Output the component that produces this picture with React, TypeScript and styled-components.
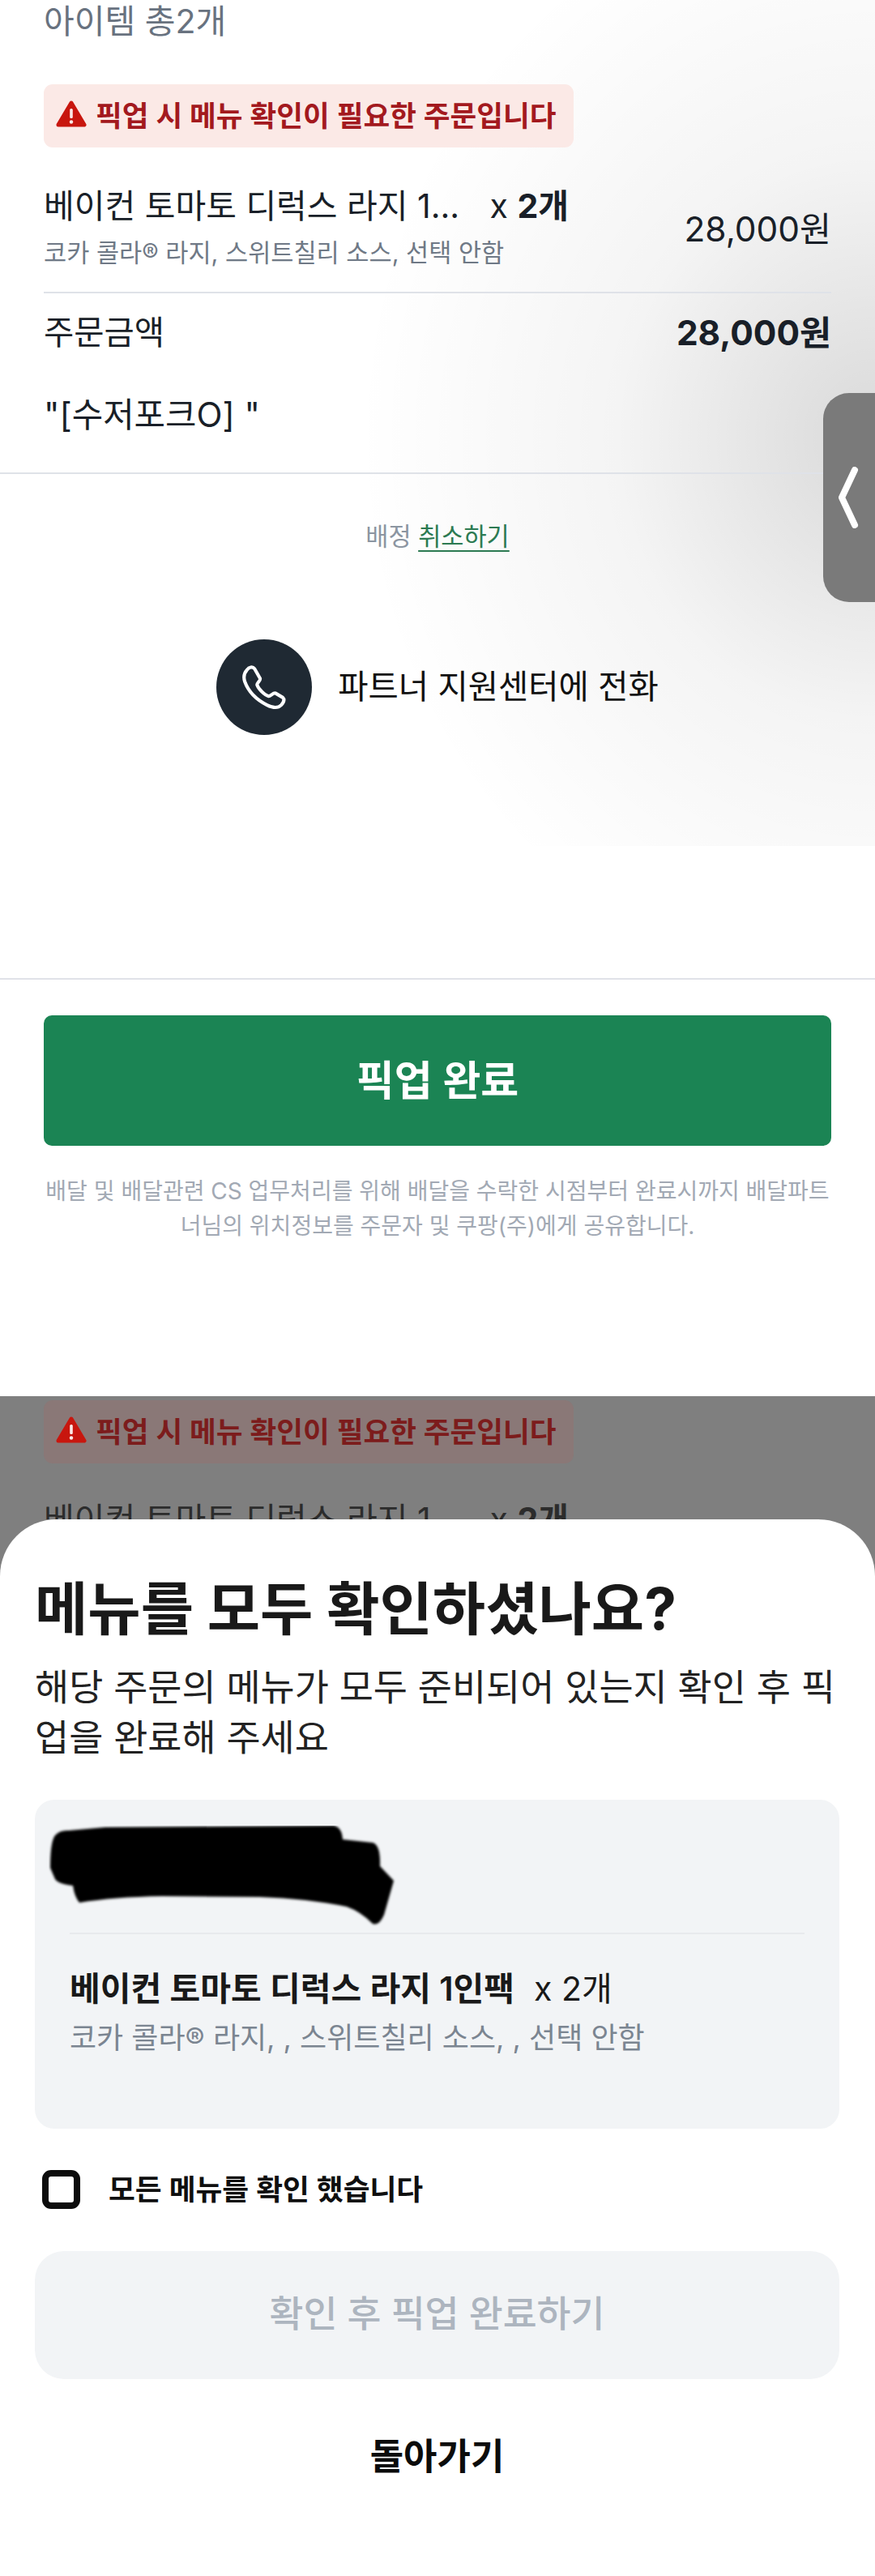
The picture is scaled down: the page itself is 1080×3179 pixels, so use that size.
import React from "react";
import styled, { createGlobalStyle } from "styled-components";

const Global = createGlobalStyle`
  html, body { margin: 0; padding: 0; background: #fff; }
  * { box-sizing: border-box; }
  body { font-family: Inter, "Noto Sans CJK KR", "Noto Sans", sans-serif; color: #191f28; }
`;

const Page = styled.div`
  width: 1080px;
  height: 3179px;
  overflow: hidden;
  position: relative;
  display: flex;
  flex-direction: column;
`;

const TopScreen = styled.section`
  height: 1723px;
  position: relative;
  background:
    radial-gradient(ellipse 640px 700px at 100% 540px, rgba(0, 0, 0, 0.15), rgba(0, 0, 0, 0.045) 50%, rgba(0, 0, 0, 0) 100%) 0 0 / 100% 1044px no-repeat,
    radial-gradient(ellipse 560px 190px at 100% 1044px, rgba(0, 0, 0, 0.035), rgba(0, 0, 0, 0) 100%) 0 1044px / 100% 170px no-repeat,
    #fff;
`;

const OrderInfo = styled.div`
  padding: 0 54px 44px;
  border-bottom: 2px solid #dfe2e8;
`;

const ItemCount = styled.div`
  font-size: 41px;
  line-height: 52px;
  color: #68727f;
`;

const AlertBox = styled.div<{ $dim?: boolean }>`
  width: 654px;
  height: 78px;
  margin-top: ${(p) => (p.$dim ? 5 : 52)}px;
  padding: 0 0 5px 15px;
  display: flex;
  align-items: center;
  gap: 11px;
  border-radius: 11px;
  background: ${(p) => (p.$dim ? "#8a7877" : "#fbe9e6")};
  color: ${(p) => (p.$dim ? "#7c1c1c" : "#a3191e")};
  font-size: 35.6px;
  font-weight: 600;
  white-space: nowrap;
`;

const ItemRow = styled.div`
  margin-top: 50px;
  padding-bottom: 28px;
  display: flex;
  align-items: center;
  justify-content: space-between;
  border-bottom: 2px solid #dfe2e8;
`;

const ItemMain = styled.div`
  display: flex;
  flex-direction: column;
  gap: 16px;
`;

const ItemName = styled.div<{ $dim?: boolean }>`
  display: flex;
  width: 648px;
  justify-content: space-between;
  font-size: 41px;
  line-height: 44px;
  white-space: nowrap;
  color: ${(p) => (p.$dim ? "#2c2c2c" : "#191f28")};
`;

const Qty = styled.span`
  b { font-weight: 700; }
`;

const ItemOptions = styled.div`
  font-size: 30.6px;
  line-height: 40px;
  color: #6f7986;
  white-space: nowrap;
`;

const Price = styled.div<{ $bold?: boolean }>`
  font-size: 42.4px;
  font-weight: ${(p) => (p.$bold ? 700 : 400)};
  padding-bottom: ${(p) => (p.$bold ? 0 : 6)}px;
`;

const TotalRow = styled.div`
  margin-top: 24px;
  display: flex;
  align-items: center;
  justify-content: space-between;
  font-size: 40.5px;
  line-height: 50px;
`;

const Note = styled.div`
  margin-top: 51px;
  font-size: 41.8px;
  line-height: 50px;
  color: #191f28;
`;

const NoteSpacer = styled.div`
  height: 2px;
`;

const Cancel = styled.div`
  margin-top: 57px;
  text-align: center;
  font-size: 30.6px;
  line-height: 40px;
  color: #8b95a1;
  a {
    color: #2c7a52;
    text-decoration: underline;
    text-underline-offset: 6px;
    text-decoration-thickness: 2px;
  }
`;

const CallRow = styled.div`
  margin-top: 107px;
  display: flex;
  justify-content: center;
  align-items: center;
  gap: 32px;
  font-size: 40.5px;
  color: #111;
`;

const CallCircle = styled.div`
  width: 118px;
  height: 118px;
  border-radius: 50%;
  background: #1f2933;
  display: flex;
  align-items: center;
  justify-content: center;
`;

const CallLabel = styled.span`
  padding-bottom: 8px;
`;

const ActionFooter = styled.div`
  margin-top: 300px;
  padding: 44px 54px 0;
  border-top: 2px solid #e0e2e8;
`;

const PickupButton = styled.button`
  display: block;
  width: 100%;
  height: 161px;
  padding: 0 0 8px;
  border: 0;
  border-radius: 10px;
  background: #1b8454;
  color: #fff;
  font-family: inherit;
  font-size: 51px;
  font-weight: 600;
`;

const Disclaimer = styled.p`
  margin: 35px 0 0;
  text-align: center;
  font-size: 28px;
  line-height: 43px;
  color: #a2a9b4;
  white-space: nowrap;
`;

const SideHandle = styled.div`
  position: absolute;
  top: 485px;
  right: 0;
  width: 64px;
  height: 258px;
  background: #7a7a7a;
  border-radius: 32px 0 0 32px;
  display: flex;
  align-items: center;
  padding-left: 18px;
`;

const Dimmed = styled.div`
  height: 152px;
  overflow: hidden;
  background: #7f7f7f;
  padding: 0 54px;
`;

const DimmedItem = styled.div`
  margin-top: 47px;
`;

const SheetArea = styled.div`
  flex: 1;
  display: flex;
  flex-direction: column;
  background: #7f7f7f;
`;

const Sheet = styled.section`
  flex: 1;
  padding: 70px 44px 0 43px;
  background: #fff;
  border-radius: 70px 70px 0 0;
`;

const SheetTitle = styled.h2`
  margin: 0;
  font-size: 71px;
  line-height: 80px;
  font-weight: 700;
  color: #191919;
  white-space: nowrap;
`;

const SheetText = styled.p`
  margin: 27px 0 0;
  font-size: 45.8px;
  line-height: 62px;
  color: #222;
  white-space: nowrap;
`;

const SummaryCard = styled.div`
  margin-top: 45px;
  height: 406px;
  padding: 32px 43px 0;
  border-radius: 24px;
  background: #f2f4f6;
`;

const RedactedMark = styled.svg`
  display: block;
  width: 430px;
  height: 125px;
  margin-left: -26px;
`;

const CardDivider = styled.div`
  height: 2px;
  margin-top: 7px;
  background: #e8eaed;
`;

const CardItem = styled.div`
  margin-top: 42px;
  font-size: 41px;
  line-height: 50px;
  white-space: nowrap;
  color: #191919;
  b { font-weight: 600; }
  span { margin-left: 24px; }
`;

const CardOptions = styled.div`
  margin-top: 13px;
  font-size: 36px;
  line-height: 46px;
  color: #7b8591;
  white-space: nowrap;
`;

const CheckRow = styled.label`
  margin-top: 51px;
  padding-left: 9px;
  display: flex;
  align-items: center;
  gap: 35px;
  height: 48px;
  line-height: 46px;
  font-size: 35.7px;
  font-weight: 600;
  color: #0f0f0f;
`;

const CheckBox = styled.span`
  width: 47px;
  height: 48px;
  border: 8px solid #0c0c0c;
  border-radius: 11px;
  background: #fff;
  flex: none;
`;

const ConfirmButton = styled.button`
  display: block;
  width: 100%;
  height: 158px;
  margin-top: 52px;
  padding: 0 0 10px;
  border: 0;
  border-radius: 36px;
  background: #f2f4f6;
  color: #adb5bf;
  font-family: inherit;
  font-size: 45.6px;
  font-weight: 500;
`;

const BackLink = styled.div`
  margin-top: 66px;
  text-align: center;
  font-size: 45px;
  line-height: 60px;
  font-weight: 600;
  color: #0c0c0c;
`;

const WarningIcon = () => (
  <svg width="38" height="34" viewBox="0 0 38 34" style={{ flex: "none" }}>
    <path d="M19 3 L35 30 H3 Z" fill="#c8160e" stroke="#c8160e" strokeWidth="5" strokeLinejoin="round" />
    <rect x="17.2" y="10" width="3.6" height="12" rx="1.6" fill="#fbe9e6" />
    <circle cx="19" cy="26.5" r="2.2" fill="#fbe9e6" />
  </svg>
);

const HandsetIcon = () => (
  <svg width="60" height="60" viewBox="200 178 175 175">
    <path
      d="M226 203 C233 193 246 190 253 199 L273 234 C276 241 262 250 262 257 C267 272 289 294 304 298 C311 298 320 285 328 287 L355 303 C362 310 358 320 349 330 C337 342 318 340 298 330 C262 312 232 284 218 246 C212 228 216 214 226 203 Z"
      fill="none"
      stroke="#fff"
      strokeWidth="12"
      strokeLinejoin="round"
    />
  </svg>
);

const Alert = ({ dim }: { dim?: boolean }) => (
  <AlertBox $dim={dim}>
    <WarningIcon />
    픽업 시 메뉴 확인이 필요한 주문입니다
  </AlertBox>
);

const ItemTitle = ({ dim }: { dim?: boolean }) => (
  <ItemName $dim={dim}>
    <span>베이컨 토마토 디럭스 라지 1...</span>
    <Qty>
      x <b>2개</b>
    </Qty>
  </ItemName>
);

export default function App() {
  return (
    <Page>
      <Global />
      <TopScreen>
        <OrderInfo>
          <ItemCount>아이템 총2개</ItemCount>
          <Alert />
          <ItemRow>
            <ItemMain>
              <ItemTitle />
              <ItemOptions>코카 콜라® 라지, 스위트칠리 소스, 선택 안함</ItemOptions>
            </ItemMain>
            <Price>28,000원</Price>
          </ItemRow>
          <TotalRow>
            <span>주문금액</span>
            <Price $bold>28,000원</Price>
          </TotalRow>
          <Note>"[수저포크O] "</Note>
          <NoteSpacer />
        </OrderInfo>
        <Cancel>
          배정 <a>취소하기</a>
        </Cancel>
        <CallRow>
          <CallCircle>
            <HandsetIcon />
          </CallCircle>
          <CallLabel>파트너 지원센터에 전화</CallLabel>
        </CallRow>
        <ActionFooter>
          <PickupButton>픽업 완료</PickupButton>
          <Disclaimer>
            배달 및 배달관련 CS 업무처리를 위해 배달을 수락한 시점부터 완료시까지 배달파트
            <br />
            너님의 위치정보를 주문자 및 쿠팡(주)에게 공유합니다.
          </Disclaimer>
        </ActionFooter>
        <SideHandle>
          <svg width="26" height="76" viewBox="0 0 26 76">
            <path d="M21 4 L5 38 L21 72" fill="none" stroke="#fff" strokeWidth="8" strokeLinecap="round" strokeLinejoin="round" />
          </svg>
        </SideHandle>
      </TopScreen>
      <Dimmed>
        <Alert dim />
        <DimmedItem>
          <ItemTitle dim />
        </DimmedItem>
      </Dimmed>
      <SheetArea>
        <Sheet>
          <SheetTitle>메뉴를 모두 확인하셨나요?</SheetTitle>
          <SheetText>
            해당 주문의 메뉴가 모두 준비되어 있는지 확인 후 픽
            <br />
            업을 완료해 주세요
          </SheetText>
          <SummaryCard>
            <RedactedMark viewBox="0 0 430 125">
              <defs>
                <filter id="soft" x="-5%" y="-5%" width="110%" height="110%">
                  <feGaussianBlur stdDeviation="1.6" />
                </filter>
              </defs>
              <path
                d="M2 52 Q2 20 8 12 Q14 5 25 6 L70 2 L352 0 Q362 2 363 17 L400 21 Q410 24 409 50 L426 68 L414 110 Q408 124 400 121 Q385 106 368 100 Q320 90 260 88 L140 87 Q80 88 38 95 Q32 88 30 74 Q12 72 8 66 Z"
                fill="#050505"
                filter="url(#soft)"
              />
            </RedactedMark>
            <CardDivider />
            <CardItem>
              <b>베이컨 토마토 디럭스 라지 1인팩</b>
              <span>x 2개</span>
            </CardItem>
            <CardOptions>코카 콜라® 라지, , 스위트칠리 소스, , 선택 안함</CardOptions>
          </SummaryCard>
          <CheckRow>
            <CheckBox />
            모든 메뉴를 확인 했습니다
          </CheckRow>
          <ConfirmButton>확인 후 픽업 완료하기</ConfirmButton>
          <BackLink>돌아가기</BackLink>
        </Sheet>
      </SheetArea>
    </Page>
  );
}
